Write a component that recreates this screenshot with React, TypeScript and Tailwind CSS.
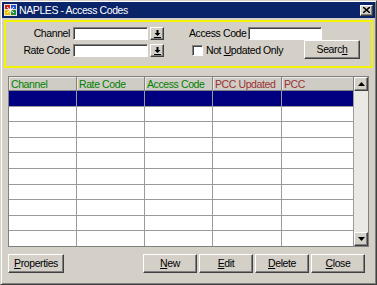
import React from "react";

const font = { fontFamily: '"Liberation Sans", Arial, sans-serif' };

const raised =
  "border border-t-white border-l-white border-r-[#404040] border-b-[#404040] shadow-[inset_-1px_-1px_#808080] bg-[#d4d0c8]";
const sunken =
  "border border-t-[#808080] border-l-[#808080] border-r-white border-b-white shadow-[inset_1px_1px_#404040] bg-white";

function DropButton() {
  return (
    <div className={`${raised} w-[14px] h-[13px] flex items-center justify-center`}>
      <svg width="7" height="8" viewBox="0 0 7 8">
        <path d="M2.5 0h2v3h2L3.5 6 0.5 3h2z" fill="#000" />
        <rect x="0" y="7" width="7" height="1" fill="#000" />
      </svg>
    </div>
  );
}

function Btn({ pre = "", u, post = "", className = "" }: { pre?: string; u: string; post?: string; className?: string }) {
  return (
    <div className={`${raised} h-[19px] flex items-center justify-center text-[10.5px] tracking-[-0.4px] text-black whitespace-nowrap ${className}`}>
      <span>
        {pre}
        <span className="underline underline-offset-1">{u}</span>
        {post}
      </span>
    </div>
  );
}

const columns = [
  { label: "Channel", color: "text-[#008000]", w: "w-[68px]" },
  { label: "Rate Code", color: "text-[#008000]", w: "w-[68px]" },
  { label: "Access Code", color: "text-[#008000]", w: "w-[68px]" },
  { label: "PCC Updated", color: "text-[#993333]", w: "w-[69px]" },
  { label: "PCC", color: "text-[#993333]", w: "w-[72px]" },
];

export default function App() {
  const rows = Array.from({ length: 10 }, (_, i) => i);
  return (
    <div
      style={font}
      className="w-[377px] h-[285px] bg-[#d4d0c8] border border-t-[#d4d0c8] border-l-[#d4d0c8] border-r-[#404040] border-b-[#404040] shadow-[inset_1px_1px_white,inset_-1px_-1px_#808080] flex flex-col overflow-hidden"
    >
      {/* title bar */}
      <div className="h-[16px] mx-[1px] mt-[1px] bg-[#0a246a] flex items-center px-[2px]">
        <svg width="13" height="12" viewBox="0 0 13 12">
          <rect x="0" y="0" width="13" height="12" fill="#e8e4d8" />
          <rect x="1" y="1" width="5" height="4" fill="#d02020" />
          <rect x="7" y="1" width="5" height="4" fill="#2050d0" />
          <rect x="1" y="6" width="5" height="5" fill="#f0c000" />
          <rect x="7" y="6" width="5" height="5" fill="#209040" />
          <path d="M3 3l7 6M10 3L3 9" stroke="#fff" strokeWidth="1" />
        </svg>
        <span className="ml-[2px] text-[10.5px] tracking-[-0.4px] text-white leading-none whitespace-nowrap">NAPLES - Access Codes</span>
        <div className={`${raised} ml-auto w-[13px] h-[11px] flex items-center justify-center`}>
          <svg width="7" height="6" viewBox="0 0 7 6">
            <path d="M0 0l7 6M7 0L0 6" stroke="#000" strokeWidth="1.5" />
          </svg>
        </div>
      </div>

      {/* filter box */}
      <div className="mx-[3px] mt-[2px] h-[48px] border-2 border-[#f4f400] flex flex-col gap-[4px] pt-[5px] text-[10.5px] tracking-[-0.4px] text-black whitespace-nowrap">
        <div className="flex items-center h-[13px]">
          <span className="w-[64px] text-right">Channel</span>
          <div className={`${sunken} ml-[3px] w-[75px] h-[13px]`} />
          <div className="ml-[2px]"><DropButton /></div>
          <span className="ml-[25px]">Access Code</span>
          <div className={`${sunken} ml-[2px] w-[74px] h-[13px]`} />
        </div>
        <div className="flex items-center h-[13px]">
          <span className="w-[64px] text-right">Rate Code</span>
          <div className={`${sunken} ml-[3px] w-[75px] h-[13px]`} />
          <div className="ml-[2px]"><DropButton /></div>
          <div className={`${sunken} ml-[28px] w-[11px] h-[11px]`} />
          <span className="ml-[3px]">
            Not <span className="underline underline-offset-1">U</span>pdated Only
          </span>
          <Btn pre="Searc" u="h" className="ml-auto mr-[11px] w-[56px] -mt-[2px]" />
        </div>
      </div>

      {/* table */}
      <div className="mx-[7px] mt-[8px] h-[171px] flex border border-[#808080]">
        <div className="flex flex-col flex-1">
          <div className="flex h-[14px] bg-[#cfccc5] border-b border-[#808080] text-[10.5px] tracking-[-0.4px] whitespace-nowrap">
            {columns.map((c) => (
              <div key={c.label} className={`${c.w} ${c.color} border-r border-[#808080] pl-[2px] leading-[14px] overflow-hidden shadow-[inset_1px_1px_#eceae4]`}>
                {c.label}
              </div>
            ))}
          </div>
          <div className="flex flex-col flex-1 bg-white">
            {rows.map((r) => (
              <div key={r} className={`flex flex-1 border-b border-[#9a9a9a] last:border-b-0 ${r === 0 ? "bg-[#000080]" : "bg-white"}`}>
                {columns.map((c) => (
                  <div key={c.label} className={`${c.w} border-r border-[#9a9a9a]`} />
                ))}
              </div>
            ))}
          </div>
        </div>
        {/* scrollbar */}
        <div className="w-[14px] flex flex-col bg-[#ebe9e4]">
          <div className={`${raised} h-[14px] flex items-center justify-center`}>
            <svg width="7" height="4" viewBox="0 0 7 4"><path d="M3.5 0L7 4H0z" fill="#000" /></svg>
          </div>
          <div className="flex-1" />
          <div className={`${raised} h-[14px] flex items-center justify-center`}>
            <svg width="7" height="4" viewBox="0 0 7 4"><path d="M0 0h7L3.5 4z" fill="#000" /></svg>
          </div>
        </div>
      </div>

      {/* buttons */}
      <div className="flex mt-[7px] mx-[7px]">
        <Btn u="P" post="roperties" className="w-[56px]" />
        <div className="ml-auto flex gap-[2px] mr-[4px]">
          <Btn u="N" post="ew" className="w-[54px]" />
          <Btn u="E" post="dit" className="w-[54px]" />
          <Btn u="D" post="elete" className="w-[54px]" />
          <Btn u="C" post="lose" className="w-[54px]" />
        </div>
      </div>
    </div>
  );
}
